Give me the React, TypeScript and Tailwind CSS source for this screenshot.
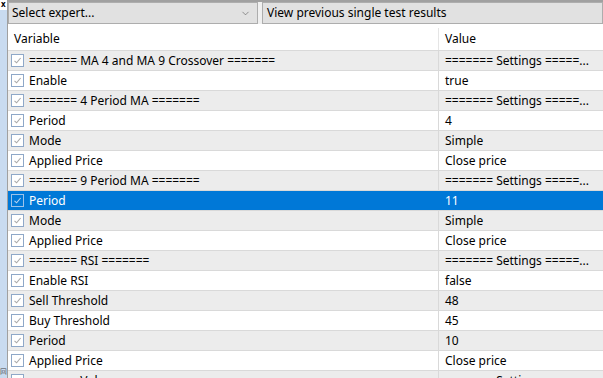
import { ChevronDown } from "lucide-react";

type Row = { name: string; value: string; section?: boolean };

const rows: Row[] = [
  { name: "======= MA 4 and MA 9 Crossover =======", value: "======= Settings =====...", section: true },
  { name: "Enable", value: "true" },
  { name: "======= 4 Period MA =======", value: "======= Settings =====...", section: true },
  { name: "Period", value: "4" },
  { name: "Mode", value: "Simple" },
  { name: "Applied Price", value: "Close price" },
  { name: "======= 9 Period MA =======", value: "======= Settings =====...", section: true },
  { name: "Period", value: "11" },
  { name: "Mode", value: "Simple" },
  { name: "Applied Price", value: "Close price" },
  { name: "======= RSI =======", value: "======= Settings =====...", section: true },
  { name: "Enable RSI", value: "false" },
  { name: "Sell Threshold", value: "48" },
  { name: "Buy Threshold", value: "45" },
  { name: "Period", value: "10" },
  { name: "Applied Price", value: "Close price" },
  { name: "======= Volume =======", value: "======= Settings =====...", section: true },
];

const SELECTED = 7;

function Check({ selected }: { selected: boolean }) {
  return (
    <div
      className={`flex h-[13px] w-[13px] shrink-0 items-center justify-center border ${
        selected ? "border-[#9cc3ea] bg-[#0078d7]" : "border-[#8fa8c8] bg-white"
      }`}
    >
      <svg width="9" height="9" viewBox="0 0 9 9" fill="none">
        <path d="M1.5 4.8 L3.6 6.8 L7.6 2" stroke={selected ? "#b8d4f0" : "#a8a8a8"} strokeWidth="1.1" />
      </svg>
    </div>
  );
}

export default function App() {
  return (
    <div
      className="flex h-[378px] w-[603px] overflow-hidden bg-white text-[12px] text-black"
      style={{ fontFamily: '"Noto Sans", "Open Sans", sans-serif' }}
    >
      <div className="flex w-[8px] shrink-0 flex-col border-r border-[#a0a0a0] bg-[#c9dbf0]">
        <div className="h-[10px] shrink-0 bg-white pl-[1px] text-[8px] font-bold leading-[8px]">x</div>
        <div className="flex-1" />
        <div className="mb-[2px] h-[8px] shrink-0 text-[7px] leading-[8px] text-[#444]">回</div>
      </div>
      <div className="flex min-w-0 flex-1 flex-col">
        <div className="h-[2px] shrink-0 bg-[#a0a0a0]" />
        <div className="flex h-[22px] shrink-0 gap-[4px] bg-[#f0f0f0]">
          <div className="flex w-[250px] items-center justify-between border border-[#adadad] bg-[#e1e1e1] pl-[3px] pr-[6px]">
            <span>Select expert...</span>
            <ChevronDown size={11} strokeWidth={1.3} className="text-[#555]" />
          </div>
          <div className="flex flex-1 items-center border border-[#adadad] bg-[#e1e1e1] pl-[4px]">
            View previous single test results
          </div>
        </div>
        <div className="h-[4px] shrink-0 bg-white" />
        <div className="flex h-[22px] shrink-0 items-center bg-white">
          <div className="w-[431px] border-r border-[#e5e5e5] pl-[6px] leading-[22px]">Variable</div>
          <div className="pl-[6px]">Value</div>
        </div>
        {rows.map((r, i) => {
          const sel = i === SELECTED;
          const bg = sel ? "bg-[#0078d7] text-white" : i % 2 === 0 ? "bg-[#ececec]" : "bg-white";
          return (
            <div key={i} className={`flex h-[20px] shrink-0 border-t border-[#d9d9d9] ${bg}`}>
              <div className={`flex w-[431px] items-center gap-[5px] border-r pl-[3px] ${sel ? "border-[#0078d7]" : "border-[#d9d9d9]"}`}>
                <Check selected={sel} />
                <span className="whitespace-nowrap">{r.name}</span>
              </div>
              <div className="flex items-center whitespace-nowrap pl-[6px]">{r.value}</div>
            </div>
          );
        })}
      </div>
    </div>
  );
}
